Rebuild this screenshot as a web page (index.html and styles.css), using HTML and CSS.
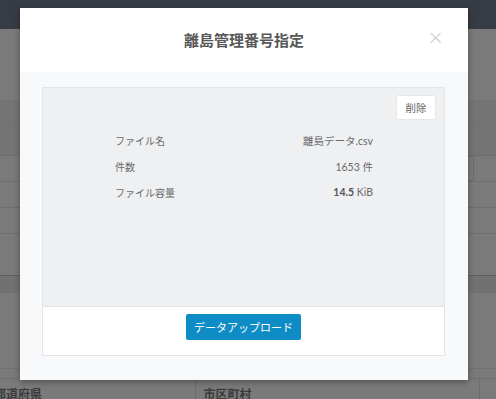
FILE: index.html
```html
<!DOCTYPE html>
<html lang="ja">
<head>
<meta charset="utf-8">
<link rel="stylesheet" href="styles.css">
</head>
<body>
<div class="page">
  <div class="navbar"></div>
  <div class="bg-gap"></div>
  <div class="bg-band bg-head"></div>
  <div class="bg-band bg-head2"></div>
  <div class="bg-row"><div class="bg-input"></div></div>
  <div class="bg-row"></div>
  <div class="bg-row"></div>
  <div class="bg-row bg-last"></div>
  <div class="bg-dark"></div>
  <div class="bg-gap2"></div>
  <div class="bg-line"></div>
  <div class="bg-table">
    <div class="bg-cell c1">都道府県</div>
    <div class="bg-cell c2">市区町村</div>
    <div class="bg-cell c3"></div>
  </div>
</div>

<div class="modal">
  <div class="modal-header">
    <h1 class="modal-title">離島管理番号指定</h1>
    <span class="close">×</span>
  </div>
  <div class="modal-body">
    <div class="panel">
      <div class="panel-main">
        <div class="actions"><button class="btn-delete">削除</button></div>
        <div class="info">
          <div class="info-row"><span class="label">ファイル名</span><span class="value">離島データ.csv</span></div>
          <div class="info-row"><span class="label">件数</span><span class="value">1653 件</span></div>
          <div class="info-row"><span class="label">ファイル容量</span><span class="value"><b>14.5</b> KiB</span></div>
        </div>
      </div>
      <div class="panel-footer">
        <button class="btn-upload">データアップロード</button>
      </div>
    </div>
  </div>
</div>
</body>
</html>
```

FILE: styles.css
```css
* { box-sizing: border-box; }
html, body {
  margin: 0;
  padding: 0;
  width: 496px;
  height: 399px;
  overflow: hidden;
  font-family: Lato, "Noto Sans CJK JP", sans-serif;
  background: #7a7a7a;
}
.page {
  display: flex;
  flex-direction: column;
  height: 399px;
}
.navbar { height: 29px; background: #373b43; flex: none; }
.bg-gap { height: 71px; flex: none; background: #7a7a7a; }
.bg-band { flex: none; background: #747474; }
.bg-head { height: 24px; border-top: 1px solid #717171; }
.bg-head2 { height: 31px; border-top: 1px solid #707070; }
.bg-row {
  height: 26px;
  flex: none;
  border-top: 1px solid #6e6e6e;
  position: relative;
}
.bg-last { height: 42px; }
.bg-input {
  position: absolute;
  left: 464px;
  top: 0;
  width: 10px;
  height: 25px;
  border: 1px solid #6c6c6c;
}
.bg-dark { height: 18px; flex: none; background: #717171; border-top: 1px solid #5e5e5e; }
.bg-gap2 { height: 75px; flex: none; }
.bg-line { height: 10px; flex: none; border-top: 1px solid #707070; }
.bg-table {
  display: flex;
  flex: none;
  height: 30px;
  border-top: 1px solid #6e6e6e;
}
.bg-cell {
  font-family: "Noto Sans CJK JP", sans-serif;
  font-size: 12px;
  font-weight: bold;
  color: #3a3a3a;
  padding: 6px 8px;
  border-right: 1px solid #6e6e6e;
  white-space: nowrap;
  overflow: hidden;
}
.c1 { width: 200px; text-indent: -14px; }
.c2 { width: 291px; }
.c3 { flex: 1; border-right: none; }

.modal {
  position: absolute;
  left: 20px;
  top: 8px;
  width: 448px;
  height: 372px;
  background: #f8f9fb;
  box-shadow: 0 2px 6px rgba(0,0,0,0.35);
  display: flex;
  flex-direction: column;
}
.modal-header {
  height: 64px;
  background: #fff;
  display: flex;
  align-items: center;
  justify-content: center;
  position: relative;
  flex: none;
}
.modal-title {
  margin: 0;
  font-family: "Noto Sans CJK JP", sans-serif;
  font-size: 15px;
  font-weight: bold;
  color: #585858;
  padding-bottom: 2px;
}
.close {
  position: absolute;
  right: 24px;
  top: 17px;
  font-size: 20px;
  color: #c8c8c8;
  font-family: "DejaVu Sans", sans-serif;
  font-weight: 300;
}
.modal-body {
  flex: 1;
  padding: 15px 23px 24px 22px;
  display: flex;
}
.panel {
  flex: 1;
  border: 1px solid #e3e5e8;
  display: flex;
  flex-direction: column;
}
.panel-main {
  flex: 1;
  background: #eff0f2;
  padding: 7px 8px;
  border-bottom: 1px solid #e1e3e6;
}
.actions { display: flex; justify-content: flex-end; }
.btn-delete {
  width: 40px;
  height: 25px;
  background: #fff;
  border: 1px solid #e6e7ea;
  border-radius: 2px;
  font-family: "Noto Sans CJK JP", sans-serif;
  font-size: 10.5px;
  color: #666;
  padding: 0;
}
.info {
  margin: 7px 63px 0 64px;
  display: flex;
  flex-direction: column;
}
.info-row {
  height: 26px;
  display: flex;
  align-items: center;
  justify-content: space-between;
  font-size: 10px;
  color: #6a6a6a;
}
.value { font-size: 10.5px; }
.value b { color: #555; font-weight: bold; }
.panel-footer {
  height: 48px;
  flex: none;
  background: #fff;
  display: flex;
  justify-content: center;
  align-items: flex-start;
  padding-top: 7px;
}
.btn-upload {
  width: 115px;
  height: 26px;
  background: #0e8cc5;
  color: #fff;
  border: none;
  border-radius: 2px;
  font-family: "Noto Sans CJK JP", sans-serif;
  font-size: 11px;
  padding: 0;
}
```
